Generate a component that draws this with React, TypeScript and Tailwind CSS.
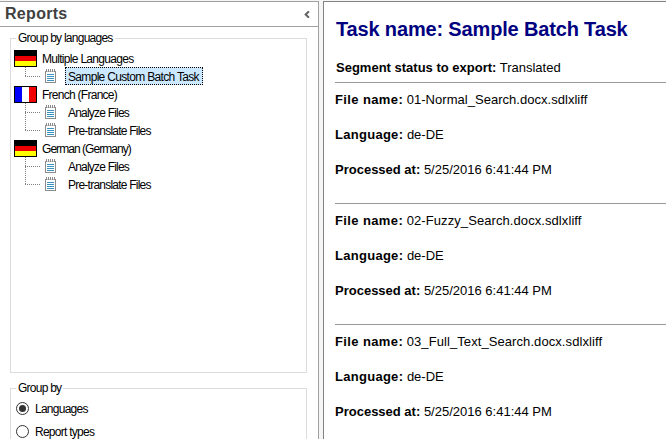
import type { ReactNode } from "react";

function GermanFlag() {
  return (
    <svg width="23" height="17" viewBox="0 0 23 17" shapeRendering="crispEdges" className="shrink-0">
      <rect width="23" height="17" fill="#000" />
      <rect x="1" y="6" width="21" height="5" fill="#f00000" />
      <rect x="1" y="11" width="21" height="5" fill="#ffff00" />
    </svg>
  );
}

function FrenchFlag() {
  return (
    <svg width="23" height="17" viewBox="0 0 23 17" shapeRendering="crispEdges" className="shrink-0">
      <rect width="23" height="17" fill="#000" />
      <rect x="1" y="1" width="7" height="15" fill="#0000ff" />
      <rect x="8" y="1" width="7" height="15" fill="#fff" />
      <rect x="15" y="1" width="7" height="15" fill="#f00000" />
    </svg>
  );
}

function ReportIcon() {
  return (
    <svg width="11" height="14" viewBox="0 0 11 14" shapeRendering="crispEdges" className="shrink-0">
      <path d="M.5 2v11.5h10V2" fill="none" stroke="#8c8c8c" />
      <path d="M1 2.5h9" stroke="#c4c4c4" />
      <path d="M1.5 0v3M3.5 0v3M5.5 0v3M7.5 0v3M9.5 0v3" stroke="#8c8c8c" />
      <path d="M2 5.5h7M2 7.5h7M2 9.5h7M2 11.5h7" stroke="#3a93c0" />
    </svg>
  );
}

function Branch({ last }: { last: boolean }) {
  return (
    <svg width="20" height="18" viewBox="0 0 20 18" shapeRendering="crispEdges" className="shrink-0">
      <path d={last ? "M.5 0v10" : "M.5 0v18"} stroke="#808080" strokeDasharray="1 1" />
      <path d="M0 9.5h16" stroke="#808080" strokeDasharray="1 1" />
    </svg>
  );
}

function Language({ flag, name, children }: { flag: ReactNode; name: ReactNode; children: ReactNode }) {
  return (
    <div>
      <div className="flex h-[18px] items-center">
        {flag}
        <span className="ml-[5px] leading-[18px] pt-[2px]">{name}</span>
      </div>
      {children}
    </div>
  );
}

function Report({ last = false, selected = false, children }: { last?: boolean; selected?: boolean; children: ReactNode }) {
  return (
    <div className="flex h-[18px] items-center pl-[11px]">
      <Branch last={last} />
      <ReportIcon />
      <span
        className={
          selected
            ? "ml-[9px] h-[18px] w-[138px] border border-dotted border-black bg-[#cce8ff] pl-[2px] leading-[18px]"
            : "ml-[9px] h-[18px] pl-[3px] leading-[20px]"
        }
      >
        {children}
      </span>
    </div>
  );
}

function Radio({ checked = false, children }: { checked?: boolean; children: ReactNode }) {
  return (
    <div className="flex h-[23px] items-center">
      <span className="flex size-[13px] items-center justify-center rounded-full border border-[#333]">
        {checked && <span className="size-[7px] rounded-full bg-[#333]" />}
      </span>
      <span className="ml-[6px] pt-px">{children}</span>
    </div>
  );
}

function Field({ label, children }: { label: ReactNode; children: ReactNode }) {
  return (
    <p className="h-[35px] leading-[15px]">
      <b>{label}</b> {children}
    </p>
  );
}

function FileEntry({ name }: { name: ReactNode }) {
  return (
    <section className="h-[121px] shrink-0 border-t border-[#999] pt-[9px]">
      <Field label={<span className="tracking-[0.38px]">File name:</span>}>{name}</Field>
      <Field label={<span className="tracking-[0.28px]">Language:</span>}>de-DE</Field>
      <Field label="Processed at:">5/25/2016 6:41:44 PM</Field>
    </section>
  );
}

export default function App() {
  return (
    <div className="flex h-[439px] w-[666px] overflow-hidden bg-[#f5f5f5] pt-px font-['Liberation_Sans',Arial,sans-serif] text-black">
      <aside className="flex w-[319px] shrink-0 flex-col border-t border-r border-[#a0a0a0] bg-white text-[12px] whitespace-nowrap">
        <header className="flex h-[25px] shrink-0 items-center justify-between border-b border-[#a0a0a0] pr-[8px] pl-[5px]">
          <h1 className="text-[16px] leading-[24px] font-bold tracking-[0.3px] text-[#404040]">Reports</h1>
          <svg width="6" height="7" viewBox="0 0 6 7" className="mt-px">
            <path d="M5 .3L1.6 3.5L5 6.7" fill="none" stroke="#606060" strokeWidth="1.9" />
          </svg>
        </header>
        <fieldset className="ml-[10px] mt-[4px] h-[342px] w-[297px] shrink-0 border border-[#dcdcdc] pl-[3px]">
          <legend className="ml-[2px] h-[14px] px-[2px] leading-[14px] tracking-[-0.75px]">Group by languages</legend>
          <div className="pt-[4px]">
            <Language flag={<GermanFlag />} name={<span className="tracking-[-0.7px]">Multiple Languages</span>}>
              <Report last selected><span className="tracking-[-0.68px]">Sample Custom Batch Task</span></Report>
            </Language>
            <Language flag={<FrenchFlag />} name={<span className="tracking-[-0.73px]">French (France)</span>}>
              <Report><span className="tracking-[-0.8px]">Analyze Files</span></Report>
              <Report last><span className="tracking-[-0.77px]">Pre-translate Files</span></Report>
            </Language>
            <Language flag={<GermanFlag />} name={<span className="tracking-[-0.95px]">German (Germany)</span>}>
              <Report><span className="tracking-[-0.8px]">Analyze Files</span></Report>
              <Report last><span className="tracking-[-0.77px]">Pre-translate Files</span></Report>
            </Language>
          </div>
        </fieldset>
        <fieldset className="ml-[10px] mt-[8px] h-[80px] w-[297px] shrink-0 border border-[#dcdcdc] pl-[5px]">
          <legend className="h-[14px] px-[2px] leading-[14px] tracking-[-0.75px]">Group by</legend>
          <div className="pt-[2px] tracking-[-0.74px]">
            <Radio checked>Languages</Radio>
            <Radio>Report types</Radio>
          </div>
        </fieldset>
      </aside>
      <main className="ml-[4px] flex flex-1 flex-col overflow-hidden border-t border-l border-[#828282] bg-white pl-[11px] text-[13px] whitespace-nowrap">
        <h2 className="ml-px mt-[15px] h-[43px] shrink-0 text-[20px] leading-[24px] font-bold tracking-[-0.16px] text-[#000080]">
          Task name: Sample Batch Task
        </h2>
        <p className="ml-px h-[22px] shrink-0 leading-[15px]">
          <b>Segment status to export:</b> Translated
        </p>
        <FileEntry name={<span className="tracking-[0.03px]">01-Normal_Search.docx.sdlxliff</span>} />
        <FileEntry name={<span className="tracking-[0.08px]">02-Fuzzy_Search.docx.sdlxliff</span>} />
        <FileEntry name={<span className="tracking-[0.08px]">03_Full_Text_Search.docx.sdlxliff</span>} />
      </main>
    </div>
  );
}
